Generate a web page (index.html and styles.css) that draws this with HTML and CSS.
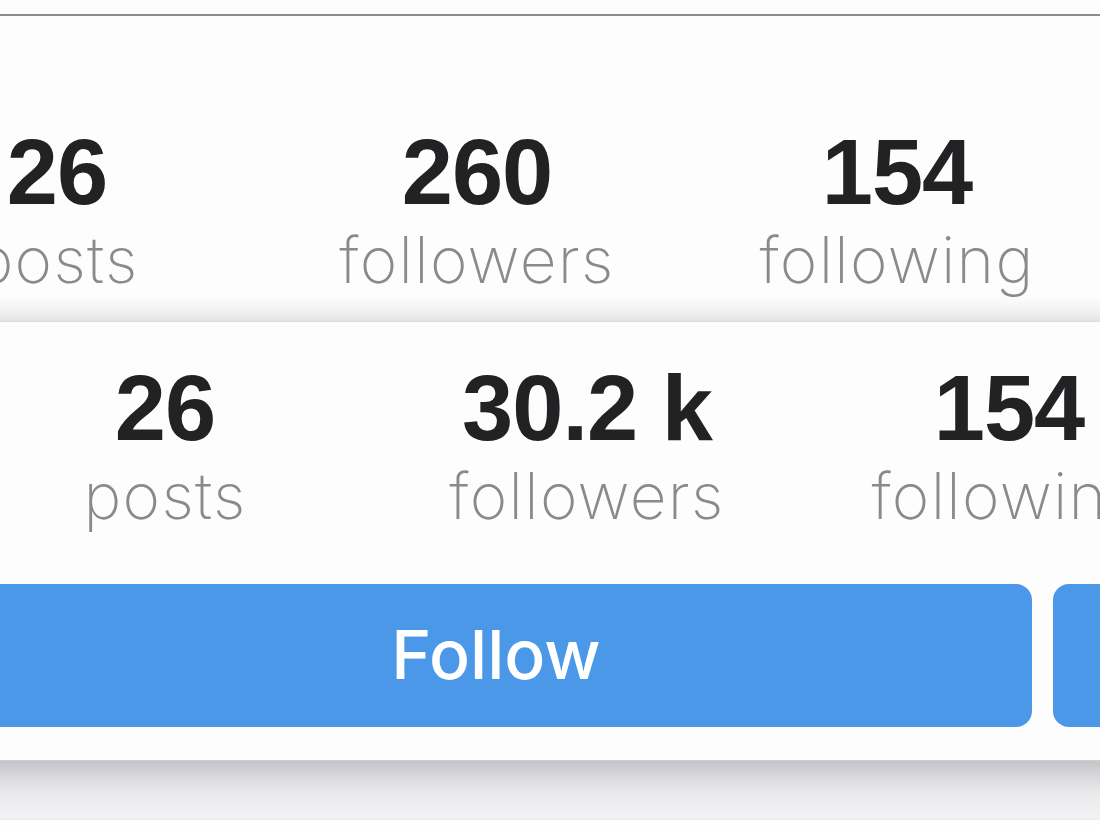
FILE: index.html
```html
<!DOCTYPE html>
<html>
<head>
	<meta charset="utf-8">
	<title>Profile stats</title>
	<link rel="stylesheet" href="styles.css">
</head>
<body>
	<div class="topline"></div>
	<!-- 上面那张卡片 -->
	<div class="card card-top">
		<ul class="stats stats-top">
			<li><b>26</b><span>posts</span></li>
			<li><b>260</b><span>followers</span></li>
			<li><b>154</b><span>following</span></li>
		</ul>
	</div>
	<!-- 下面那张卡片 -->
	<div class="card card-bottom">
		<ul class="stats stats-bottom">
			<li><b>26</b><span>posts</span></li>
			<li><b>30.2 k</b><span>followers</span></li>
			<li><b>154</b><span>following</span></li>
		</ul>
		<div class="actions">
			<a class="btn btn-follow" href="javascript:;">Follow</a>
			<a class="btn btn-more" href="javascript:;"></a>
		</div>
	</div>
	<div class="shade"></div>
</body>
</html>
```

FILE: styles.css
```css
* {
	padding: 0px;
	margin: 0px;
}
html, body {
	width: 1100px;
	height: 825px;
	overflow: hidden;
}
body {
	background: #fdfdfd;
	font-family: "Liberation Sans", Arial, sans-serif;
}
.topline {
	margin-top: 14px;
	height: 2px;
	background: #8c8c8c;
}
.card {
	overflow: hidden;
}
.card-top {
	height: 305px;
	border-bottom: 1px solid #dcdcde;
	background: linear-gradient(to bottom, #fdfdfd 280px, #f1f1f2 296px, #e4e4e6 305px);
}
.card-bottom {
	height: 438px;
	background: #fdfdfd;
}
.stats {
	list-style: none;
	display: grid;
	grid-template-columns: 420px 420px 420px;
}
.stats li {
	display: flex;
	flex-direction: column;
	align-items: center;
	gap: 10px;
	white-space: nowrap;
}
.stats b {
	font-size: 92px;
	line-height: 92px;
	font-weight: bold;
	color: #222224;
	letter-spacing: -1px;
}
.stats span {
	font-family: "Inter", "Open Sans", sans-serif;
	font-weight: 250;
	font-size: 64px;
	line-height: 64px;
	color: #8a8a8a;
	letter-spacing: 1.3px;
}
.stats-top {
	margin-left: -153px;
	padding-top: 110px;
}
.stats-bottom {
	margin-left: -46px;
	padding-top: 40px;
	grid-template-columns: 422px 422px 422px;
}
.actions {
	display: flex;
	gap: 21px;
	margin-top: 56px;
	margin-left: -40px;
}
.btn {
	display: flex;
	align-items: center;
	justify-content: center;
	flex-shrink: 0;
	height: 143px;
	border-radius: 16px;
	background: #4a98e7;
	color: #fff;
	text-decoration: none;
	font-family: "Inter", "Liberation Sans", sans-serif;
	font-weight: 500;
	font-size: 68px;
	padding-bottom: 4px;
	box-sizing: border-box;
}
.btn-follow {
	width: 1072px;
}
.btn-more {
	width: 200px;
}
.shade {
	height: 58px;
	border-top: 1px solid #cfced3;
	border-bottom: 1px solid #ececee;
	background: linear-gradient(to bottom, #c4c3c8, #dadadd 16px, #ebebed 34px, #f2f2f4);
}
```
